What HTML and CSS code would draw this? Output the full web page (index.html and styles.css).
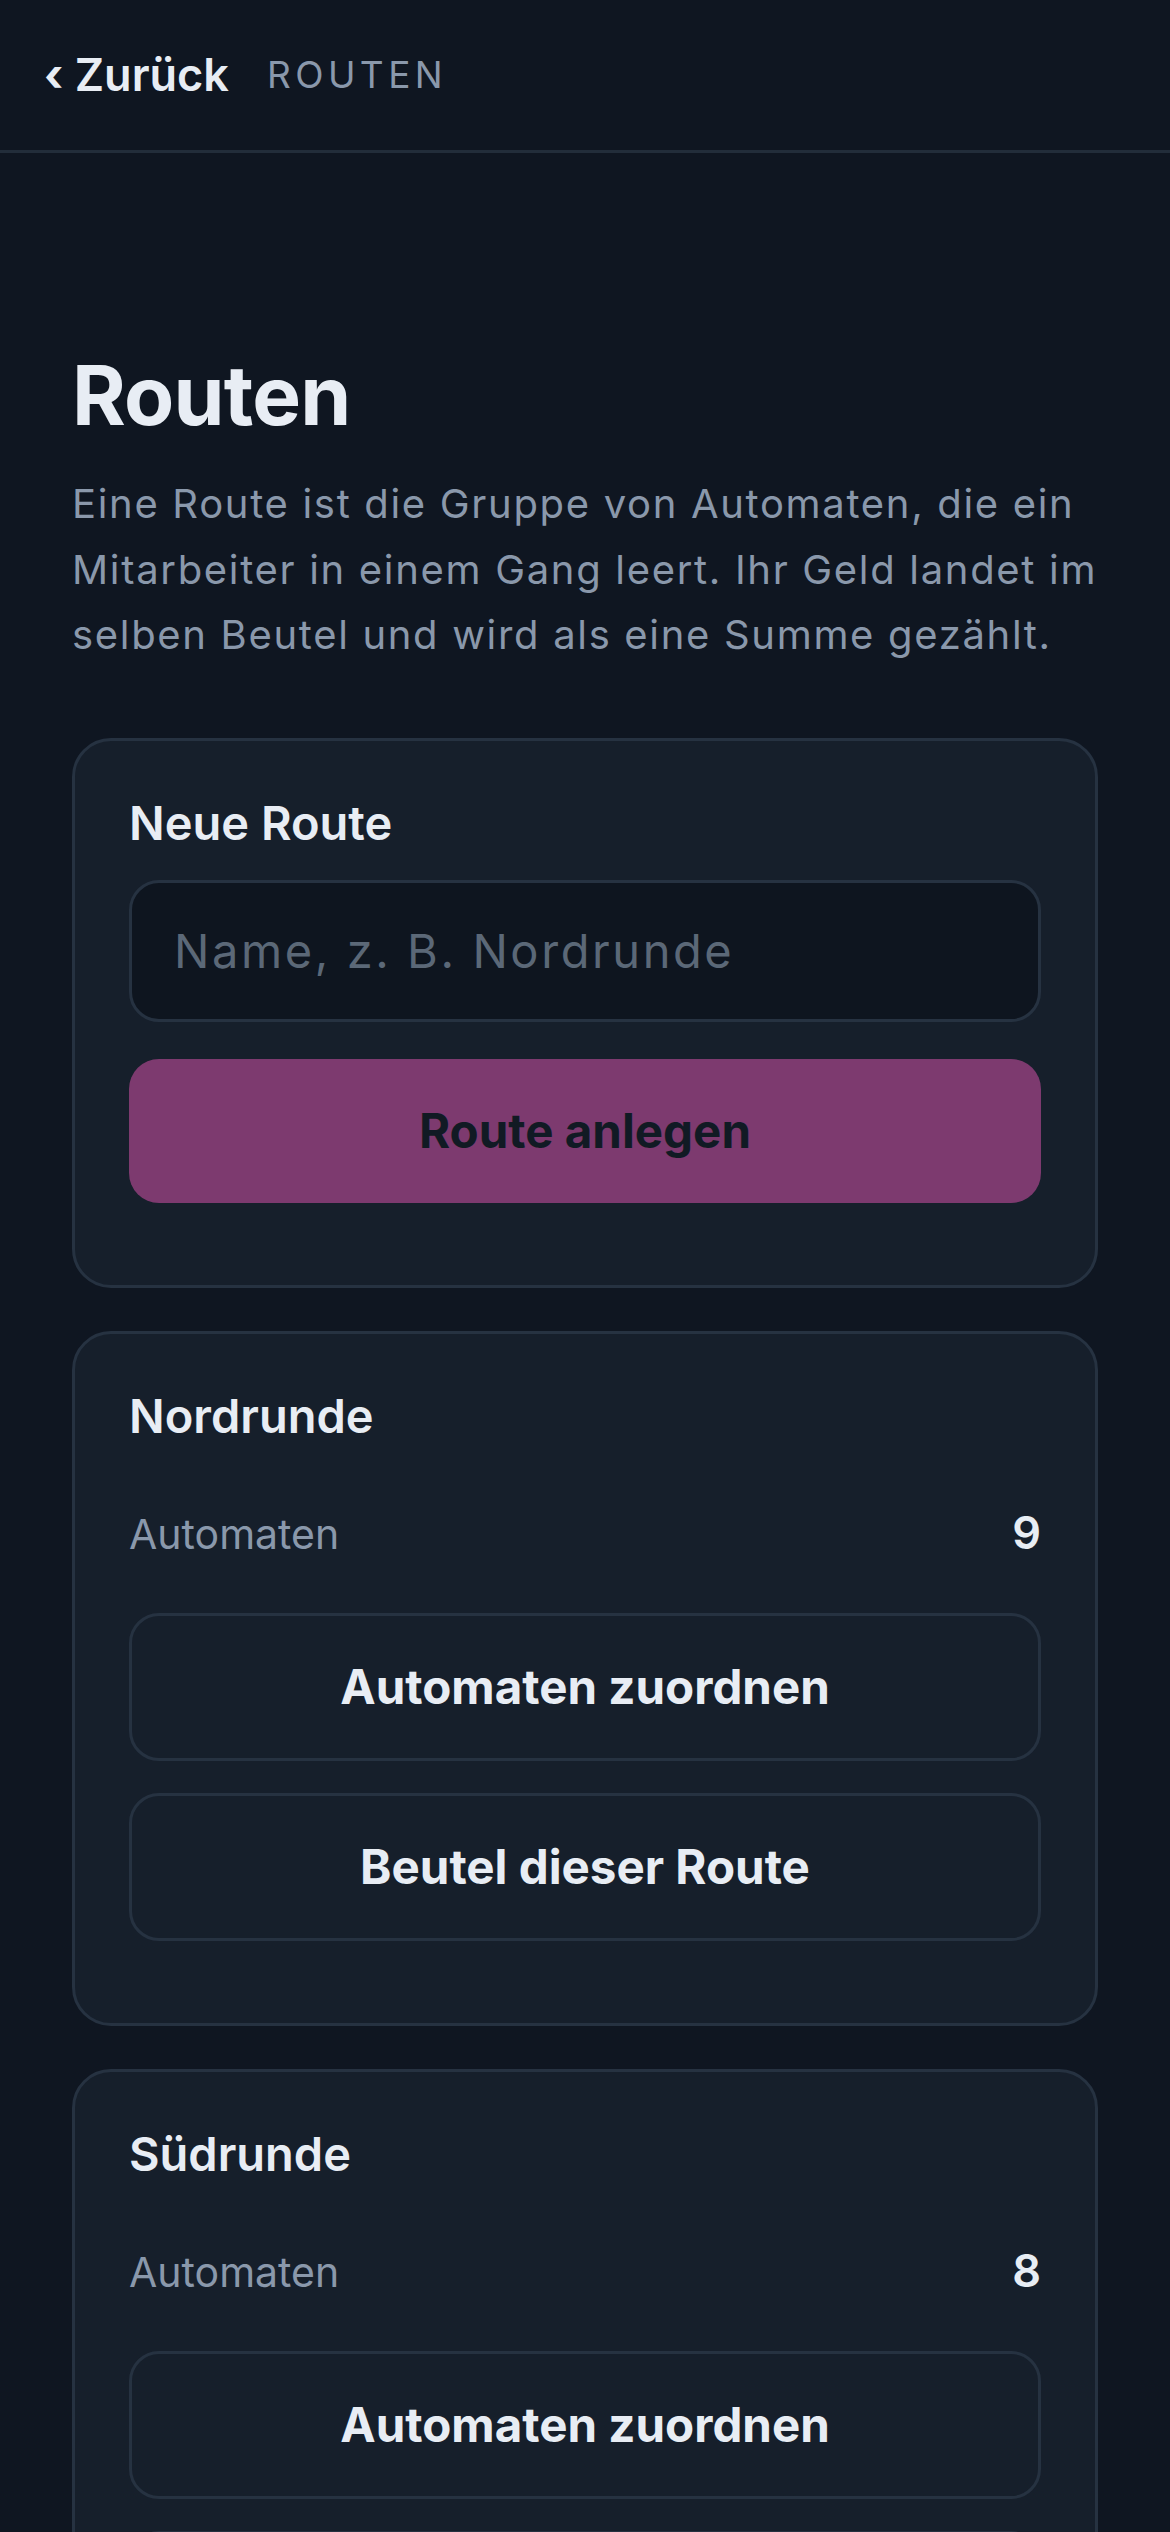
FILE: index.html
```html
<!DOCTYPE html>
<html lang="de">
<head>
<meta charset="utf-8">
<title>Routen</title>
<link rel="stylesheet" href="styles.css">
</head>
<body>
<header class="topbar">
  <a class="back" href="#"><span class="chev">‹</span> Zurück</a>
  <span class="crumb">ROUTEN</span>
</header>
<main class="page">
  <h1 class="title">Routen</h1>
  <p class="intro">Eine Route ist die Gruppe von Automaten, die ein Mitarbeiter in einem Gang leert. Ihr Geld landet im selben Beutel und wird als eine Summe gezählt.</p>

  <section class="card">
    <h2 class="card-title">Neue Route</h2>
    <input class="field" type="text" placeholder="Name, z. B. Nordrunde">
    <button class="btn-primary" type="button">Route anlegen</button>
  </section>

  <section class="card">
    <h2 class="card-title">Nordrunde</h2>
    <div class="stat"><span class="stat-label">Automaten</span><span class="stat-value">9</span></div>
    <div class="actions">
      <button class="btn-outline" type="button">Automaten zuordnen</button>
      <button class="btn-outline" type="button">Beutel dieser Route</button>
    </div>
  </section>

  <section class="card">
    <h2 class="card-title">Südrunde</h2>
    <div class="stat"><span class="stat-label">Automaten</span><span class="stat-value">8</span></div>
    <div class="actions">
      <button class="btn-outline" type="button">Automaten zuordnen</button>
      <button class="btn-outline" type="button">Beutel dieser Route</button>
    </div>
  </section>
</main>
</body>
</html>
```

FILE: styles.css
```css
* { box-sizing: border-box; }
html, body {
  margin: 0;
  padding: 0;
  background: #0f1621;
  color: #e8edf4;
  font-family: Inter, "Noto Sans", "Liberation Sans", sans-serif;
}
.topbar {
  height: 153px;
  display: flex;
  align-items: center;
  gap: 38px;
  padding: 0 0 0 44px;
  border-bottom: 3px solid #222d3a;
}
.back {
  color: #e8edf4;
  text-decoration: none;
  font-size: 45px;
  font-weight: 600;
  line-height: 54px;
}
.chev { font-weight: 700; }
.crumb {
  color: #8a98ab;
  font-size: 37px;
  letter-spacing: 0.12em;
  line-height: 54px;
}
.page {
  padding: 195px 72px 0 72px;
}
.title {
  margin: 0;
  font-size: 82px;
  font-weight: 700;
  line-height: 96px;
  letter-spacing: -0.01em;
}
.intro {
  margin: 27px 0 0 0;
  font-size: 40px;
  line-height: 65.5px;
  letter-spacing: 0.042em;
  color: #8a98ab;
}
.card {
  margin-top: 70px;
  background: #161f2b;
  border: 3px solid #263241;
  border-radius: 39px;
  padding: 54px 54px 82px 54px;
}
.card + .card { margin-top: 43px; }
.card-title {
  margin: 0;
  font-size: 47px;
  font-weight: 600;
  line-height: 56px;
}
.field {
  display: block;
  width: 100%;
  height: 142px;
  margin-top: 29px;
  background: #0e151f;
  border: 3px solid #263241;
  border-radius: 30px;
  padding: 0 42px;
  font-family: inherit;
  font-size: 47px;
  letter-spacing: 0.055em;
  color: #e8edf4;
  outline: none;
}
.field::placeholder { color: #5b6877; }
.btn-primary {
  display: block;
  width: 100%;
  height: 144px;
  margin-top: 37px;
  border: none;
  border-radius: 30px;
  background: #7d3a6f;
  color: #111a24;
  font-family: inherit;
  font-size: 47.5px;
  font-weight: 700;
}
.stat {
  display: flex;
  justify-content: space-between;
  align-items: baseline;
  margin-top: 64px;
  line-height: 50px;
}
.stat-label {
  font-size: 41px;
  color: #8a98ab;
}
.stat-value {
  font-size: 45px;
  font-weight: 600;
  color: #e8edf4;
}
.actions {
  display: flex;
  flex-direction: column;
  gap: 32px;
  margin-top: 54px;
}
.btn-outline {
  display: block;
  width: 100%;
  height: 148px;
  border: 3px solid #263241;
  border-radius: 30px;
  background: #161f2b;
  color: #e8edf4;
  font-family: inherit;
  font-size: 47.5px;
  font-weight: 700;
}
```
